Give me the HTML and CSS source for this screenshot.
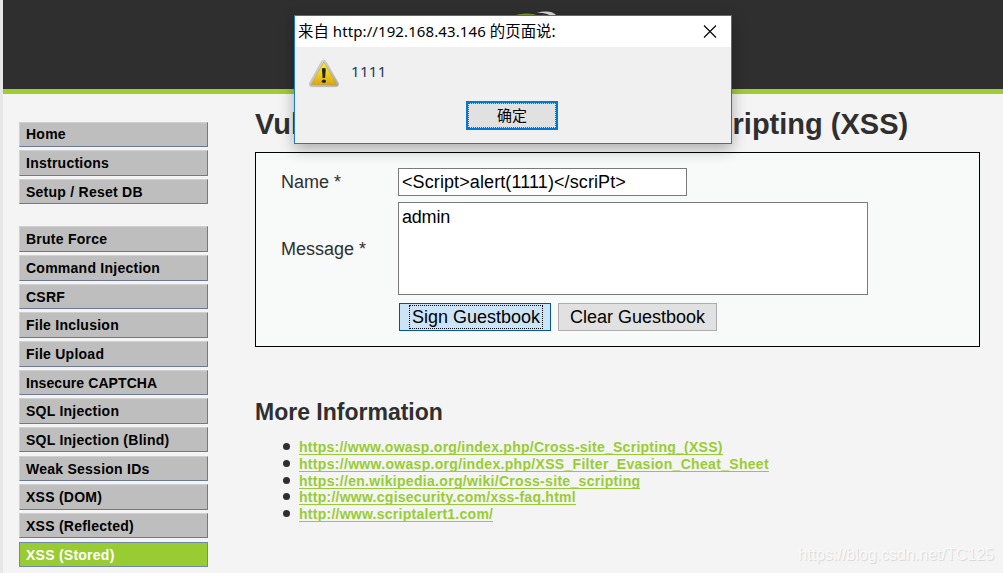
FILE: index.html
```html
<!DOCTYPE html>
<html lang="en">
<head>
<meta charset="utf-8">
<title>Vulnerability: Stored Cross Site Scripting (XSS)</title>
<link rel="stylesheet" href="styles.css">
</head>
<body>
<header class="header">
  <svg class="logo" width="90" height="60" viewBox="0 0 90 60" aria-hidden="true">
    <path d="M6 28C16 6 34 3 48 6" fill="none" stroke="#7d9637" stroke-width="3"/>
    <path d="M49 3Q64-1 70 6L66 7Q58 2 49 3Z" fill="#dcdcdc"/>
  </svg>
</header>
<div class="page">
  <nav class="sidebar">
    <ul class="menu">
      <li class="item first">Home</li>
      <li class="item">Instructions</li>
      <li class="item">Setup / Reset DB</li>
    </ul>
    <ul class="menu">
      <li class="item">Brute Force</li>
      <li class="item">Command Injection</li>
      <li class="item">CSRF</li>
      <li class="item">File Inclusion</li>
      <li class="item">File Upload</li>
      <li class="item caps">Insecure CAPTCHA</li>
      <li class="item">SQL Injection</li>
      <li class="item">SQL Injection (Blind)</li>
      <li class="item">Weak Session IDs</li>
      <li class="item">XSS (DOM)</li>
      <li class="item">XSS (Reflected)</li>
      <li class="item selected">XSS (Stored)</li>
    </ul>
  </nav>
  <main class="content">
    <h1 class="title">Vulnerability: Stored Cross Site Scripting (XSS)</h1>
    <form class="panel">
      <label class="label" for="name">Name *</label>
      <input class="field" id="name" type="text" value="&lt;Script&gt;alert(1111)&lt;/scriPt&gt;">
      <label class="label low" for="message">Message *</label>
      <textarea class="field area" id="message">admin</textarea>
      <div class="actions">
        <button class="button primary" type="button"><span class="focus">Sign Guestbook</span></button>
        <button class="button" type="button">Clear Guestbook</button>
      </div>
    </form>
    <h2 class="subtitle">More Information</h2>
    <ul class="links">
      <li><a class="tight" href="#">https://www.owasp.org/index.php/Cross-site_Scripting_(XSS)</a></li>
      <li><a href="#">https://www.owasp.org/index.php/XSS_Filter_Evasion_Cheat_Sheet</a></li>
      <li><a href="#">https://en.wikipedia.org/wiki/Cross-site_scripting</a></li>
      <li><a class="tight" href="#">http://www.cgisecurity.com/xss-faq.html</a></li>
      <li><a class="tight" href="#">http://www.scriptalert1.com/</a></li>
    </ul>
  </main>
</div>
<div class="dialog" role="alertdialog">
  <div class="dialog-bar">
    <span class="dialog-title">来自 <span class="latin">http://192.168.43.146</span> 的页面说:</span>
    <svg class="close" width="14" height="14" viewBox="0 0 14 14"><path d="M1 .5L13 12.500M13 .5L1 12.500" stroke="#000" stroke-width="1.1" fill="none"/></svg>
  </div>
  <div class="dialog-body">
    <svg class="warn" width="32" height="30" viewBox="1 0 32 30">
      <defs>
        <linearGradient id="gold" x1="0" y1="0" x2="0" y2="1"><stop offset="0" stop-color="#f5ea4a"/><stop offset=".5" stop-color="#f0d21c"/><stop offset="1" stop-color="#d9a515"/></linearGradient>
        <linearGradient id="rim" x1="0" y1="0" x2="1" y2="1"><stop offset="0" stop-color="#dedede"/><stop offset="1" stop-color="#aaaaaa"/></linearGradient>
      </defs>
      <path d="M13.500 2.500Q15.700-.5 18 2.500L30.300 24Q31.500 27.500 28 27.700H4Q.3 27.500 1.500 24Z" fill="url(#rim)" stroke="#b8b8b8" stroke-width=".6"/>
      <path d="M15.800 3L28.700 25.700H3Z" fill="url(#gold)" stroke="#c09a20" stroke-width=".5" stroke-linejoin="round"/>
      <path d="M13.900 9.500Q15.800 8.300 17.800 9.500L17.100 19H14.600Z" fill="#24241c"/><ellipse cx="15.900" cy="22.300" rx="2.100" ry="1.800" fill="#24241c"/>
    </svg>
    <span class="message">1111</span>
    <button class="ok" type="button"><span class="ok-focus">确定</span></button>
  </div>
</div>
<div class="watermark">https://blog.csdn.net/TC125</div>
</body>
</html>
```
FILE: styles.css
```css
* { box-sizing: border-box; }
body {
  margin: 0;
  width: 1003px;
  height: 573px;
  overflow: hidden;
  background: #f4f4f4;
  border-left: 3px solid #e7e7e7;
  color: #2f2f2f;
  font-family: "Liberation Sans", Arial, sans-serif;
}
ul { list-style: none; margin: 0; padding: 0; }
.header {
  height: 94px;
  padding: 10px 0 0 484px;
  background: #2f2f2f;
  border-bottom: 5px solid #a0cc33;
}
.page { display: flex; }
.sidebar {
  display: flex;
  flex-direction: column;
  gap: 22.2px;
  width: 252px;
  padding: 27.600px 0 0 16px;
}
.menu { display: flex; flex-direction: column; gap: 3.270px; }
.item {
  width: 189px;
  height: 25.400px;
  padding-left: 6px;
  background: #bebebe;
  border: 1px solid;
  border-color: #d0d0d0 #6c7894 #6c7894 #d0d0d0;
  color: #000;
  font-weight: bold;
  font-size: 14px;
  line-height: 24.600px;
  letter-spacing: .25px;
}
.first { line-height: 23px; }
.caps { letter-spacing: .08px; }
.selected { background: #99cc33; border-color: #7288a8; color: #fff; }
.content { width: 725px; padding-top: 13px; }
.title { margin: 0; font-size: 29px; line-height: 34px; white-space: nowrap; }
.panel {
  display: grid;
  grid-template-columns: 117px 1fr;
  row-gap: 6px;
  align-items: center;
  justify-items: start;
  height: 195px;
  margin-top: 11px;
  padding: 15px 25px 15px;
  align-content: start;
  background: #f8faf9;
  border: 1px solid #000;
}
.label { font-size: 18px; }
.low { padding-top: 2px; }
.field {
  width: 289px;
  height: 28px;
  padding: 0 3px;
  border: 1px solid #7a7a7a;
  border-radius: 0;
  background: #fff;
  color: #000;
  font: 18px "Liberation Sans", Arial, sans-serif;
  letter-spacing: .1px;
  outline: 0;
}
.area { width: 470px; height: 93px; padding-top: 4px; resize: none; display: block; letter-spacing: -.2px; }
.actions { grid-column: 2; display: flex; gap: 7px; padding: 2px 0 0 1px; }
.button {
  width: 159px;
  height: 28px;
  padding: 0;
  border: 1px solid #adadad;
  background: #e1e1e1;
  color: #000;
  font: 18px/20px "Liberation Sans", Arial, sans-serif;
  white-space: nowrap;
}
.primary { width: 152px; background: #cce4f7; border-color: #005499; }
.focus { display: block; width: 134px; height: 24px; margin: 0 0 0 9px; border: 1px dotted #000; line-height: 22px; }
.subtitle { margin: 51px 0 0; font-size: 23px; line-height: 28px; }
.links { padding: 13px 0 0 28px; }
.links li { display: flex; align-items: center; height: 16.700px; }
.links li::before { content: ""; width: 7px; height: 7px; margin: -1px 9px 0 0; border-radius: 50%; background: #2f2f2f; }
.links a { height: 16px; border-bottom: 1px solid #99cc33; color: #99cc33; font-weight: bold; font-size: 14px; line-height: 16px; letter-spacing: .31px; text-decoration: none; }
.links .tight { letter-spacing: .26px; }
.dialog {
  position: absolute;
  left: 294px;
  top: 15px;
  width: 438px;
  height: 129px;
  border: 1px solid #1c7cc8;
  background: #f0f0f0;
  box-shadow: 0 5px 14px rgba(0, 0, 0, .3);
  color: #000;
  font-family: "Noto Sans", "Noto Sans CJK SC", sans-serif;
}
.dialog-bar { display: flex; justify-content: space-between; align-items: center; height: 31px; padding: 0 14px 0 3px; background: #fff; }
.dialog-title { font-size: 15.400px; line-height: 31px; white-space: nowrap; }
.latin { font-size: 15px; letter-spacing: .1px; }
.dialog-body { display: grid; grid-template-columns: 42px 1fr; padding: 12px 14px; }
.message { font-size: 15px; line-height: 24px; letter-spacing: .3px; color: #173a63; }
.ok { grid-column: 1 / 3; width: 92px; height: 29px; margin: 12px 0 0 157px; padding: 0; border: 2px solid #0078d7; background: #e1e1e1; font: 15px/22px "Noto Sans CJK SC", sans-serif; color: #000; }
.ok-focus { display: block; height: 25px; border: 1px dotted #555; }
.watermark { position: absolute; right: 9px; bottom: 9px; color: #f9f9f9; font-size: 16px; line-height: 18px; text-shadow: 1px 1px 1px #d6d6d6; }
```
